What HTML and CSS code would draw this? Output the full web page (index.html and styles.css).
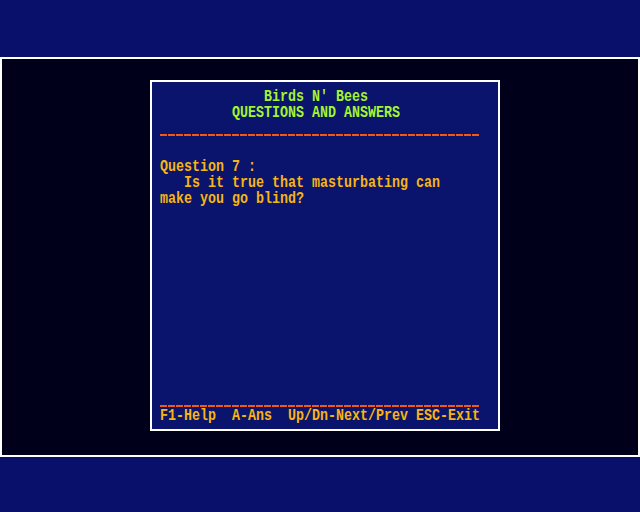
FILE: index.html
```html
<!DOCTYPE html>
<html>
<head>
<meta charset="utf-8">
<link rel="stylesheet" href="styles.css">
</head>
<body>
<div class="screen">
  <div class="bar"></div>
  <div class="frame">
    <div class="window">
      <div class="line title"><span>             Birds N' Bees</span></div>
      <div class="line title"><span>         QUESTIONS AND ANSWERS</span></div>
      <div class="rule rule-top"></div>
      <div class="body">
        <div class="line text"><span>Question 7 :</span></div>
        <div class="line text"><span>   Is it true that masturbating can</span></div>
        <div class="line text"><span>make you go blind?</span></div>
      </div>
      <div class="footer">
        <div class="rule"></div>
        <div class="line text keys"><span>F1-Help  A-Ans  Up/Dn-Next/Prev ESC-Exit</span></div>
      </div>
    </div>
  </div>
  <div class="bar bar-bottom"></div>
</div>
</body>
</html>
```
FILE: styles.css
```css
html, body {
  margin: 0;
  padding: 0;
  background: #08106c;
}
.screen {
  width: 640px;
  height: 512px;
  display: flex;
  flex-direction: column;
  background: #08106c;
  overflow: hidden;
}
.bar {
  height: 57px;
  flex: none;
  background: #08106c;
}
.bar-bottom {
  height: 55px;
}
.frame {
  flex: none;
  height: 400px;
  box-sizing: border-box;
  border: 2px solid #ffffff;
  background: #00001a;
  padding: 21px 0 0 148px;
}
.window {
  width: 350px;
  height: 351px;
  box-sizing: border-box;
  border: 2px solid #ffffff;
  background: #0a146c;
  padding: 7px 0 5px 8px;
  display: flex;
  flex-direction: column;
}
.line {
  height: 16px;
  line-height: 16px;
  font-family: "Liberation Mono", "DejaVu Sans Mono", monospace;
  font-size: 13.33px;
  font-weight: bold;
  white-space: pre;
}
.line span {
  display: inline-block;
  vertical-align: top;
  line-height: 12px;
  margin-top: 2px;
  transform: scaleY(1.3);
  transform-origin: 50% 50%;
}
.title {
  color: #a4f42c;
}
.text {
  color: #f8b410;
}
.rule {
  width: 320px;
  height: 2px;
  background: repeating-linear-gradient(to right, #f05a14 0 7px, transparent 7px 8px);
}
.rule-top {
  margin-top: 13px;
}
.body {
  margin-top: 23px;
}
.footer {
  margin-top: auto;
}
.keys {
  margin-top: 1px;
}
```
